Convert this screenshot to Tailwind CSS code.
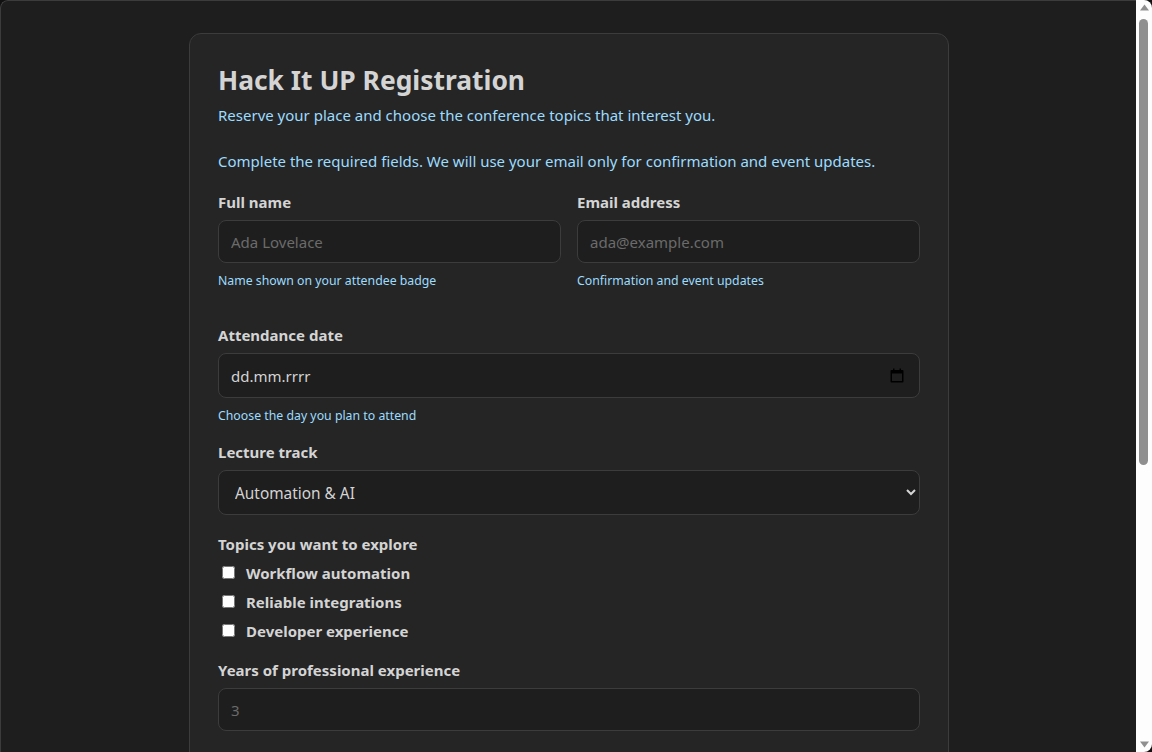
<!DOCTYPE html>
<html lang="en">
<head>
    <meta charset="UTF-8">
    <meta name="viewport" content="width=device-width, initial-scale=1.0">
    <title>Hack It UP Registration</title>
    <script src="https://cdn.jsdelivr.net/npm/@tailwindcss/browser@4"></script>
</head>
<body class="h-screen overflow-hidden bg-[#111111] text-[#d4d4d4] font-['Noto_Sans',sans-serif]">
<div class="h-full flex overflow-hidden rounded-t-lg rounded-br-lg bg-[#1e1e1e]">

    <main class="flex-1 h-full overflow-hidden pt-[32px] pl-px border-l border-t border-[#3c3c3c] rounded-tl-lg">
        <form class="w-[760px] mx-auto bg-[#252526] border border-[#3c3c3c] rounded-xl px-7 pt-7 pb-10">
            <h1 class="text-[26.4px] leading-9 font-bold">Hack It UP Registration</h1>
            <p class="mt-[5px] text-[15px] leading-6 text-[#9cdcfe]">Reserve your place and choose the conference topics that interest you.</p>
            <p class="mt-[22px] text-[15px] leading-6 text-[#9cdcfe]">Complete the required fields. We will use your email only for confirmation and event updates.</p>

            <div class="grid grid-cols-2 gap-4 mt-[17px]">
                <div>
                    <label class="block text-[15px] leading-6 font-bold">Full name</label>
                    <input type="text" placeholder="Ada Lovelace" class="block w-full h-[43px] mt-1.5 px-3 bg-[#1e1e1e] border border-[#3c3c3c] rounded-lg text-[15px] placeholder:text-[#6b6b6b]">
                    <p class="mt-2 text-[12.3px] leading-5 text-[#9cdcfe]">Name shown on your attendee badge</p>
                </div>
                <div>
                    <label class="block text-[15px] leading-6 font-bold">Email address</label>
                    <input type="email" placeholder="ada@example.com" class="block w-full h-[43px] mt-1.5 px-3 bg-[#1e1e1e] border border-[#3c3c3c] rounded-lg text-[15px] placeholder:text-[#6b6b6b]">
                    <p class="mt-2 text-[12.3px] leading-5 text-[#9cdcfe]">Confirmation and event updates</p>
                </div>
            </div>

            <label class="block mt-[32px] text-[15px] leading-6 font-bold">Attendance date</label>
            <div class="relative mt-1.5">
                <input type="text" value="dd.mm.rrrr" class="block w-full h-[45px] px-3 bg-[#1e1e1e] border border-[#3c3c3c] rounded-lg text-[15px] text-[#d4d4d4]">
                <svg class="absolute right-4 top-[15px]" width="14" height="15" viewBox="0 0 14 15" fill="#000"><path d="M3 0.5h1.5V2h5V0.5H11V2h1.5A1 1 0 0 1 13.5 3v10.5a1 1 0 0 1-1 1h-11a1 1 0 0 1-1-1V3a1 1 0 0 1 1-1H3zM2 5.5V13h10V5.5z"/></svg>
            </div>
            <p class="mt-2 text-[12.3px] leading-5 text-[#9cdcfe]">Choose the day you plan to attend</p>

            <label class="block mt-[14px] text-[15px] leading-6 font-bold">Lecture track</label>
            <select class="block w-full h-[45px] mt-1.5 px-3 pt-[2px] bg-[#1e1e1e] border border-[#3c3c3c] rounded-lg text-[15.4px] text-[#d4d4d4]">
                <option>Automation &amp; AI</option>
                <option>Reliable integrations</option>
                <option>Developer experience</option>
            </select>

            <label class="block mt-[17px] text-[15px] leading-6 font-bold">Topics you want to explore</label>
            <div class="mt-[5px] flex flex-col gap-[5px]">
                <label class="flex items-center h-6 text-[15px] font-bold"><input type="checkbox" class="ml-1 mr-[11px] mb-[2px] w-[13px] h-[13px] appearance-auto">Workflow automation</label>
                <label class="flex items-center h-6 text-[15px] font-bold"><input type="checkbox" class="ml-1 mr-[11px] mb-[2px] w-[13px] h-[13px] appearance-auto">Reliable integrations</label>
                <label class="flex items-center h-6 text-[15px] font-bold"><input type="checkbox" class="ml-1 mr-[11px] mb-[2px] w-[13px] h-[13px] appearance-auto">Developer experience</label>
            </div>

            <label class="block mt-[15px] text-[15px] leading-6 font-bold">Years of professional experience</label>
            <input type="number" placeholder="3" class="block w-full h-[43px] mt-1.5 px-3 bg-[#1e1e1e] border border-[#3c3c3c] rounded-lg text-[15px] placeholder:text-[#6b6b6b]">
        </form>
    </main>

    <aside class="w-4 h-full bg-[#fdfdfd] flex flex-col items-center justify-between relative">
        <svg class="mt-[4px]" width="9" height="7" viewBox="0 0 9 7" fill="#8f8f8f"><path d="M4.5 0.5 9 6.5H0z"/></svg>
        <div class="absolute top-[19px] left-[3px] w-[9px] h-[446px] rounded-full bg-[#8f8f8f]"></div>
        <svg class="mb-[4px]" width="9" height="7" viewBox="0 0 9 7" fill="#8f8f8f"><path d="M0 0.5h9L4.5 6.5z"/></svg>
    </aside>

</div>
</body>
</html>
